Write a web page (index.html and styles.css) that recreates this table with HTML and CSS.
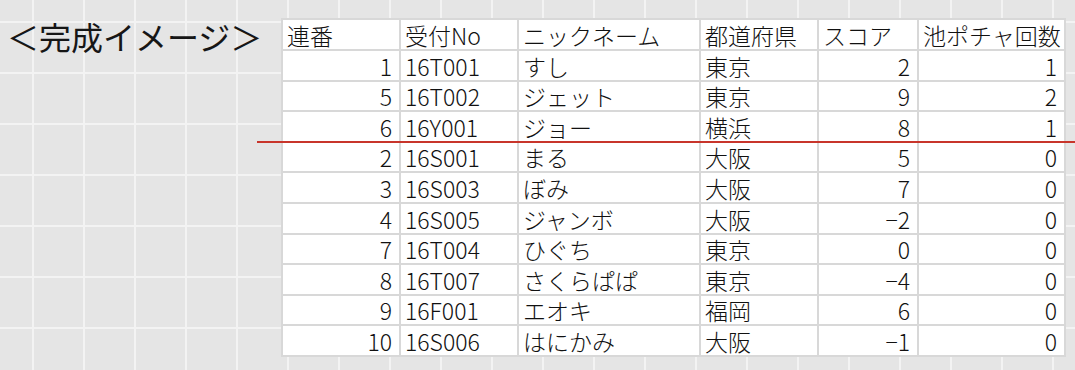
FILE: index.html
```html
<!DOCTYPE html>
<html lang="ja">
<head>
<meta charset="utf-8">
<link rel="stylesheet" href="styles.css">
</head>
<body>
<div class="page">
  <div class="title">＜完成イメージ＞</div>
  <table class="sheet">
    <colgroup>
      <col class="c-no"><col class="c-id"><col class="c-nick"><col class="c-pref"><col class="c-score"><col class="c-pond">
    </colgroup>
    <thead>
      <tr><th>連番</th><th>受付No</th><th>ニックネーム</th><th>都道府県</th><th>スコア</th><th>池ポチャ回数</th></tr>
    </thead>
    <tbody>
      <tr><td class="num">1</td><td>16T001</td><td>すし</td><td>東京</td><td class="num">2</td><td class="num">1</td></tr>
      <tr><td class="num">5</td><td>16T002</td><td>ジェット</td><td>東京</td><td class="num">9</td><td class="num">2</td></tr>
      <tr><td class="num">6</td><td>16Y001</td><td>ジョー</td><td>横浜</td><td class="num">8</td><td class="num">1</td></tr>
      <tr><td class="num">2</td><td>16S001</td><td>まる</td><td>大阪</td><td class="num">5</td><td class="num">0</td></tr>
      <tr><td class="num">3</td><td>16S003</td><td>ぼみ</td><td>大阪</td><td class="num">7</td><td class="num">0</td></tr>
      <tr><td class="num">4</td><td>16S005</td><td>ジャンボ</td><td>大阪</td><td class="num">−2</td><td class="num">0</td></tr>
      <tr><td class="num">7</td><td>16T004</td><td>ひぐち</td><td>東京</td><td class="num">0</td><td class="num">0</td></tr>
      <tr><td class="num">8</td><td>16T007</td><td>さくらぱぱ</td><td>東京</td><td class="num">−4</td><td class="num">0</td></tr>
      <tr><td class="num">9</td><td>16F001</td><td>エオキ</td><td>福岡</td><td class="num">6</td><td class="num">0</td></tr>
      <tr><td class="num">10</td><td>16S006</td><td>はにかみ</td><td>大阪</td><td class="num">−1</td><td class="num">0</td></tr>
    </tbody>
  </table>
  <div class="marker"></div>
</div>
</body>
</html>
```

FILE: styles.css
```css
html, body {
  margin: 0;
  padding: 0;
}

body {
  width: 1075px;
  height: 370px;
  overflow: hidden;
  background-color: #e5e5e5;
  background-image:
    linear-gradient(to right, #f3f3f3 0, #f3f3f3 2px, transparent 2px),
    linear-gradient(to bottom, #f3f3f3 0, #f3f3f3 2px, transparent 2px);
  background-size: 51px 51px;
  background-position: 32px 21px;
  font-family: "Noto Sans CJK JP", "Noto Sans", sans-serif;
  color: #111;
}

.page {
  position: relative;
  display: flex;
  align-items: flex-start;
  padding: 18px 0 0 7px;
}

.title {
  width: 274px;
  flex: none;
  font-size: 32px;
  line-height: 40px;
  margin-top: -2px;
  font-weight: 400;
  color: #161616;
}

.sheet {
  flex: none;
  width: 783px;
  table-layout: fixed;
  border-collapse: collapse;
  background: #fff;
  font-size: 23px;
}

.c-no { width: 118px; }
.c-id { width: 118px; }
.c-nick { width: 182px; }
.c-pref { width: 118px; }
.c-score { width: 100px; }
.c-pond { width: 147px; }

.sheet th,
.sheet td {
  border: 2px solid #d8d8d8;
  padding: 0 4px 0 4px;
  font-weight: 300;
  text-align: left;
  vertical-align: bottom;
  line-height: 28px;
  white-space: nowrap;
}

.sheet thead tr {
  height: 31px;
}

.sheet tbody tr {
  height: 30.6px;
}

.sheet td.num {
  text-align: right;
  padding-right: 7px;
}

.marker {
  position: absolute;
  left: 257px;
  right: 0;
  top: 141px;
  height: 2px;
  background: #c8352b;
}
```
